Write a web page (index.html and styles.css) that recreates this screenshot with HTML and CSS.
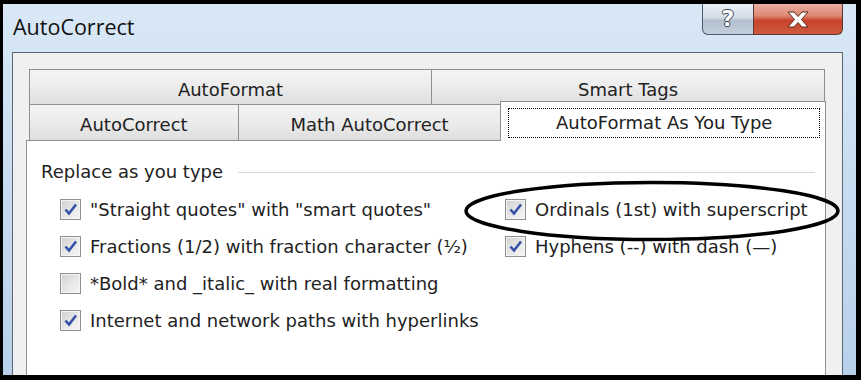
FILE: index.html
```html
<!DOCTYPE html>
<html lang="en">
  <head>
    <meta charset="UTF-8" />
    <title>AutoCorrect</title>
    <link rel="stylesheet" href="styles.css">
  </head>

  <body>
    <div class="window">
      <div class="titlebar">
        <div class="title">AutoCorrect</div>
        <div class="caption-buttons">
          <div class="btn-help">?</div>
          <div class="btn-close">
            <svg width="24" height="17" viewBox="0 0 24 17">
              <polygon points="2,1 8,1 12,5.5 16,1 22,1 15.5,8.5 22,16 16,16 12,11.5 8,16 2,16 8.5,8.5" fill="#fff" stroke="#5a2b22" stroke-width="1" stroke-linejoin="round" />
            </svg>
          </div>
        </div>
      </div>

      <div class="dialog">
        <div class="tabs">
          <div class="tab-row">
            <div class="tab tab-autoformat">AutoFormat</div>
            <div class="tab tab-smarttags">Smart Tags</div>
          </div>
          <div class="tab-row front">
            <div class="tab tab-autocorrect">AutoCorrect</div>
            <div class="tab tab-math">Math AutoCorrect</div>
            <div class="tab selected"><span class="focus">AutoFormat As You Type</span></div>
          </div>
        </div>

        <div class="page">
          <div class="group-title">
            <span>Replace as you type</span>
            <div class="rule"></div>
          </div>
          <div class="options">
            <div class="opt">
              <span class="check on"><svg width="17" height="17" viewBox="0 0 17 17"><path d="M3.5 8.5 L7 12.5 L14 3.5" fill="none" stroke="#3450a8" stroke-width="2.6" /></svg></span>
              "Straight quotes" with "smart quotes"
            </div>
            <div class="opt">
              <span class="check on"><svg width="17" height="17" viewBox="0 0 17 17"><path d="M3.5 8.5 L7 12.5 L14 3.5" fill="none" stroke="#3450a8" stroke-width="2.6" /></svg></span>
              Ordinals (1st) with superscript
            </div>
            <div class="opt">
              <span class="check on"><svg width="17" height="17" viewBox="0 0 17 17"><path d="M3.5 8.5 L7 12.5 L14 3.5" fill="none" stroke="#3450a8" stroke-width="2.6" /></svg></span>
              Fractions (1/2) with fraction character (½)
            </div>
            <div class="opt">
              <span class="check on"><svg width="17" height="17" viewBox="0 0 17 17"><path d="M3.5 8.5 L7 12.5 L14 3.5" fill="none" stroke="#3450a8" stroke-width="2.6" /></svg></span>
              Hyphens (--) with dash (—)
            </div>
            <div class="opt">
              <span class="check"></span>
              *Bold* and _italic_ with real formatting
            </div>
            <div class="opt"></div>
            <div class="opt">
              <span class="check on"><svg width="17" height="17" viewBox="0 0 17 17"><path d="M3.5 8.5 L7 12.5 L14 3.5" fill="none" stroke="#3450a8" stroke-width="2.6" /></svg></span>
              Internet and network paths with hyperlinks
            </div>
          </div>
        </div>
      </div>

      <svg class="annotation" width="378" height="64" viewBox="0 0 378 64">
        <ellipse cx="189" cy="32" rx="186" ry="28.5" fill="none" stroke="#000" stroke-width="3.5" />
      </svg>
    </div>
  </body>
</html>
```

FILE: styles.css
```css
* {
  margin: 0;
  padding: 0;
  box-sizing: border-box;
}

body {
  background: #000;
  font-family: 'DejaVu Sans', sans-serif;
  color: #222;
}

.window {
  position: relative;
  width: 861px;
  height: 380px;
  border-style: solid;
  border-color: #000;
  border-width: 4px 5px 5px 3px;
  background: linear-gradient(180deg, #dae8f6 0%, #c9ddf1 45%, #b8d0ea 100%);
  display: flex;
  flex-direction: column;
}

.titlebar {
  height: 48px;
  display: flex;
  align-items: flex-start;
}

.title {
  font-family: 'Open Sans', sans-serif;
  font-size: 21.5px;
  line-height: 26px;
  color: #111;
  margin: 10px 0 0 10px;
}

.caption-buttons {
  margin-left: auto;
  margin-right: 13px;
  display: flex;
  height: 31px;
}

.btn-help {
  width: 52px;
  height: 31px;
  border: 1px solid #4a5a6e;
  border-top: 0;
  border-radius: 0 0 0 6px;
  background: linear-gradient(180deg, #e9eef4 0%, #d5dde7 45%, #b3c0cf 55%, #c3cfdc 100%);
  color: #fff;
  font-weight: bold;
  font-size: 22px;
  line-height: 29px;
  text-align: center;
  text-shadow: 1px 0 0 #3c4654, -1px 0 0 #3c4654, 0 1px 0 #3c4654, 0 -1px 0 #3c4654;
}

.btn-close {
  width: 90px;
  height: 31px;
  margin-left: -1px;
  border: 1px solid #5c3830;
  border-top: 0;
  border-radius: 0 0 6px 0;
  background: linear-gradient(180deg, #eab0a2 0%, #de8571 40%, #c7432b 55%, #cd5a3f 100%);
  display: flex;
  align-items: center;
  justify-content: center;
}

.dialog {
  flex: 1;
  margin: 0 13px 0 9px;
  border: 1px solid #5b6675;
  border-bottom: 0;
  background: #f0f0f0;
  padding: 16px 16px 0 13px;
  display: flex;
  flex-direction: column;
}

.tabs {
  padding-left: 3px;
  font-size: 18px;
}

.tab-row {
  display: flex;
}

.tab-row.front {
  margin-top: -1px;
}

.tab {
  height: 36px;
  border: 1px solid #8c8f95;
  background: linear-gradient(180deg, #f4f4f4 0%, #ececec 50%, #dedede 100%);
  text-align: center;
  padding-top: 4px;
  line-height: 32px;
}

.tab + .tab {
  margin-left: -1px;
}

.tab-autoformat {
  width: 403px;
}

.tab-smarttags {
  width: 394px;
}

.front .tab {
  border-bottom: 0;
  padding-top: 5px;
  line-height: 30px;
}

.tab-autocorrect {
  width: 210px;
}

.tab-math {
  width: 264px;
}

.front .tab.selected {
  position: relative;
  z-index: 1;
  width: 326px;
  height: 40px;
  margin-top: -3px;
  margin-bottom: -1px;
  background: #fff;
  padding: 6px 5px 3px 7px;
  line-height: 27px;
}

.focus {
  display: block;
  height: 30px;
  border: 1px dotted #000;
}

.page {
  flex: 1;
  background: #fff;
  border: 1px solid #8c8f95;
  border-bottom: 0;
  padding: 20px 10px 0 14px;
  font-size: 18px;
}

.group-title {
  display: flex;
  align-items: center;
  height: 22px;
  line-height: 22px;
}

.rule {
  flex: 1;
  height: 1px;
  margin: 0 0 0 15px;
  background: #d3dae0;
}

.options {
  margin: 8px 0 0 19px;
  display: grid;
  grid-template-columns: 445px auto;
  grid-auto-rows: 37px;
}

.opt {
  display: flex;
  align-items: center;
  white-space: nowrap;
}

.check {
  width: 21px;
  height: 21px;
  margin-right: 9px;
  border: 1px solid #8e8f8f;
  background: linear-gradient(135deg, #cfcfcf 0%, #e8e8e8 55%, #f6f6f6 100%);
  box-shadow: inset 0 0 0 1px #f4f4f4;
  display: flex;
  align-items: center;
  justify-content: center;
}

.annotation {
  position: absolute;
  left: 460px;
  top: 175px;
}
```
